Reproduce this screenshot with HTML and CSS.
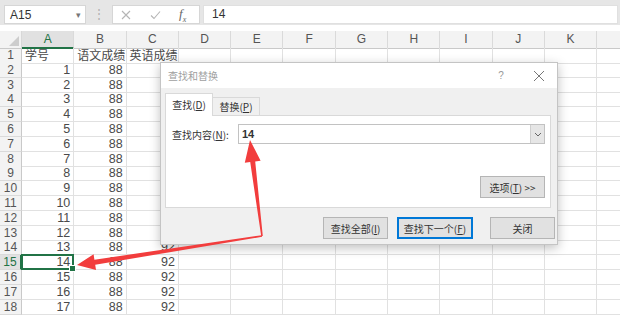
FILE: index.html
```html
<!DOCTYPE html>
<html lang="zh-CN">
<head>
  <meta charset="UTF-8">
  <title>查找和替换</title>
  <link rel="stylesheet" href="styles.css">
</head>
<body>

<div class="formula-bar">
  <div class="name-box"><span>A15</span><span class="caret">▾</span></div>
  <div class="grip">⋮</div>
  <div class="fx-box">
    <svg class="fx-icon" width="10" height="10" viewBox="0 0 10 10"><path d="M1 1 L9 9 M9 1 L1 9" stroke="#b5b5b5" stroke-width="1.1" fill="none"/></svg>
    <svg class="fx-icon" width="11" height="10" viewBox="0 0 11 10"><path d="M1 5.5 L4 8.5 L10 1.5" stroke="#b5b5b5" stroke-width="1.1" fill="none"/></svg>
    <span class="fx">f<sub>x</sub></span>
  </div>
  <div class="formula-input">14</div>
</div>

<div class="sheet" id="sheet"></div>

<div class="dialog">
  <div class="dlg-title">
    <span class="dlg-name">查找和替换</span>
    <span class="dlg-help">?</span>
    <svg class="dlg-close" width="12" height="12" viewBox="0 0 12 12"><path d="M1 1 L11 11 M11 1 L1 11" stroke="#777" stroke-width="1" fill="none"/></svg>
  </div>
  <div class="dlg-body">
    <div class="tabs">
      <div class="tab active">查找(<u>D</u>)</div>
      <div class="tab">替换(<u>P</u>)</div>
    </div>
    <div class="panel">
      <div class="find-row">
        <label>查找内容(<u>N</u>):</label>
        <div class="find-input">
          <span class="find-text">14</span>
          <span class="drop"><svg width="8" height="5" viewBox="0 0 8 5"><path d="M1 1 L4 4 L7 1" stroke="#666" stroke-width="1" fill="none"/></svg></span>
        </div>
      </div>
      <div class="opt-row"><button class="btn">选项(<u>T</u>) &gt;&gt;</button></div>
    </div>
    <div class="btn-row">
      <button class="btn">查找全部(<u>I</u>)</button>
      <button class="btn wide focus">查找下一个(<u>F</u>)</button>
      <button class="btn close">关闭</button>
    </div>
  </div>
</div>

<svg class="arrows" width="620" height="328" viewBox="0 0 620 328">
  <polygon points="262.8,235.9 255.2,161.5 260.6,160.8 250,140 244.8,162.8 250.2,162.1 261.2,236.1" fill="#f23d3d"/>
  <polygon points="261.9,235.2 94.4,259.7 93.6,254.3 77,265 96,270.1 95.2,264.7 262.1,236.8" fill="#f23d3d"/>
</svg>

<script>
  const sheet = document.getElementById("sheet");
  const cols = ["A", "B", "C", "D", "E", "F", "G", "H", "I", "J", "K", ""];

  let html = '<div class="row head"><div class="corner"></div>';
  cols.forEach(c => {
    html += `<div class="col-head${c === "A" ? " active" : ""}">${c}</div>`;
  });
  html += "</div>";

  for (let r = 1; r <= 18; r++) {
    const a = r === 1 ? '<span class="cjk">学号</span>' : r - 1;
    const b = r === 1 ? '<span class="cjk">语文成绩</span>' : 88;
    // column C rows 2-13 sit under the dialog
    const c = r === 1 ? '<span class="cjk">英语成绩</span>' : (r >= 14 ? 92 : "");
    const num = r === 1 ? "" : " num";
    html += `<div class="row"><div class="row-head${r === 15 ? " active" : ""}">${r}</div>`;
    html += `<div class="cell${num}${r === 15 ? " sel" : ""}">${a}</div>`;
    html += `<div class="cell${num}">${b}</div>`;
    html += `<div class="cell${num}">${c}</div>`;
    for (let i = 3; i < cols.length; i++) html += '<div class="cell"></div>';
    html += "</div>";
  }
  sheet.innerHTML = html;
</script>

</body>
</html>
```

FILE: styles.css
```css
* {
  box-sizing: border-box;
  margin: 0;
  padding: 0;
}

body {
  width: 620px;
  height: 328px;
  overflow: hidden;
  position: relative;
  background: #fff;
  font-family: "Liberation Sans", "Noto Sans CJK SC", sans-serif;
  color: #444;
}

/* formula bar */
.formula-bar {
  height: 25px;
  background: #e6e6e6;
  display: flex;
  align-items: flex-start;
  padding: 5px 2px 0 4px;
}

.name-box {
  width: 82px;
  height: 19px;
  background: #fff;
  border: 1px solid #d6d6d6;
  display: flex;
  align-items: center;
  justify-content: space-between;
  padding: 0 4px 0 5px;
  font-size: 12px;
  color: #333;
}

.caret {
  font-size: 9px;
  color: #777;
}

.grip {
  width: 26px;
  text-align: center;
  color: #b0b0b0;
  font-size: 12px;
  line-height: 19px;
}

.fx-box {
  width: 88px;
  height: 19px;
  background: #fff;
  border: 1px solid #d6d6d6;
  display: flex;
  align-items: center;
  gap: 19px;
  padding-left: 8px;
}

.fx {
  font-family: "Liberation Serif", serif;
  font-style: italic;
  font-size: 13px;
  color: #666;
  margin-left: -1px;
}

.fx sub {
  font-size: 8px;
}

.formula-input {
  flex: 1;
  height: 19px;
  margin-left: 3px;
  background: #fff;
  border: 1px solid #e0e0e0;
  padding-left: 8px;
  font-size: 12px;
  line-height: 17px;
  color: #333;
}

/* sheet */
.sheet {
  margin-top: 6px;
}

.row {
  display: grid;
  grid-template-columns: 22px repeat(12, 52.3px);
  height: 14.8px;
}

.row.head {
  height: 17px;
}

.corner {
  background: #f3f3f3;
  border-right: 1px solid #d8d8d8;
  border-bottom: 1px solid #c9c9c9;
  position: relative;
}

.corner::after {
  content: "";
  position: absolute;
  right: 2px;
  bottom: 2px;
  border-left: 10px solid transparent;
  border-bottom: 10px solid #cdcdcd;
}

.col-head {
  background: #f3f3f3;
  border-right: 1px solid #dadada;
  border-bottom: 1px solid #c9c9c9;
  text-align: center;
  font-size: 12px;
  line-height: 16px;
  color: #555;
}

.col-head.active {
  background: #e1e1e1;
  color: #217346;
  border-bottom: 2px solid #217346;
}

.row-head {
  background: #f3f3f3;
  border-right: 1px solid #c9c9c9;
  border-bottom: 1px solid #dadada;
  text-align: center;
  font-size: 12px;
  line-height: 14px;
  color: #555;
}

.row-head.active {
  background: #e1e1e1;
  color: #217346;
  border-right: 2px solid #217346;
}

.cell {
  border-right: 1px solid #e1e1e1;
  border-bottom: 1px solid #e1e1e1;
  font-size: 12.5px;
  line-height: 14px;
  padding: 0 3px;
  white-space: nowrap;
  color: #4a4a4a;
}

.cell.num {
  text-align: right;
}

.cjk {
  font-family: "Noto Sans CJK SC", sans-serif;
  font-size: 12px;
}

.cell.sel {
  position: relative;
}

.cell.sel::before {
  content: "";
  position: absolute;
  left: -1px;
  top: -1px;
  right: -1px;
  bottom: -1px;
  border: 2px solid #217346;
}

.cell.sel::after {
  content: "";
  position: absolute;
  right: -3px;
  bottom: -3px;
  width: 5px;
  height: 5px;
  background: #217346;
  border: 1px solid #fff;
}

/* find dialog */
.dialog {
  position: absolute;
  left: 160px;
  top: 62px;
  width: 398px;
  height: 183px;
  background: #f0f0f0;
  border: 1px solid #c4c4c4;
  box-shadow: 0 3px 10px rgba(0, 0, 0, 0.25);
  font-family: "Noto Sans CJK SC", sans-serif;
  font-size: 10px;
  color: #333;
}

.dlg-title {
  height: 25px;
  background: #fff;
  display: flex;
  align-items: center;
  padding-left: 7px;
}

.dlg-name {
  flex: 1;
  color: #a0a0a0;
}

.dlg-help {
  width: 20px;
  text-align: center;
  color: #999;
  font-family: "Liberation Sans", sans-serif;
  font-size: 10px;
}

.dlg-close {
  margin: 0 12px 0 22px;
}

.dlg-body {
  padding: 5px 4px 0 4px;
}

.tabs {
  display: flex;
  align-items: flex-end;
  height: 22px;
}

.tab {
  width: 47px;
  height: 18px;
  border: 1px solid #d9d9d9;
  border-bottom: none;
  background: #f0f0f0;
  text-align: center;
  line-height: 17px;
}

.tab.active {
  width: 48px;
  height: 23px;
  background: #fff;
  margin-bottom: -1px;
  position: relative;
  z-index: 1;
  line-height: 21px;
}

.tab + .tab {
  border-left: none;
}

.panel {
  height: 93px;
  margin-right: 2px;
  background: #fff;
  border: 1px solid #d9d9d9;
  padding: 8px 5px 0 6px;
}

.find-row {
  display: flex;
  align-items: center;
}

.find-row label {
  width: 66px;
}

.find-input {
  flex: 1;
  height: 20px;
  border: 1px solid #c2c2c2;
  display: flex;
  align-items: center;
  justify-content: space-between;
}

.find-text {
  padding-left: 3px;
  font-family: "Liberation Sans", sans-serif;
  font-size: 11px;
  font-weight: bold;
  color: #333;
}

.drop {
  width: 14px;
  height: 18px;
  background: #e6e6e6;
  border-left: 1px solid #cfcfcf;
  display: flex;
  align-items: center;
  justify-content: center;
}

.opt-row {
  display: flex;
  justify-content: flex-end;
  margin-top: 32px;
}

.btn {
  width: 65px;
  height: 22px;
  background: #e1e1e1;
  border: 1px solid #b5b5b5;
  font-family: "Noto Sans CJK SC", sans-serif;
  font-size: 10px;
  color: #333;
}

.btn-row {
  display: flex;
  justify-content: flex-end;
  gap: 9px;
  margin-top: 9px;
  margin-right: -2px;
}

.btn.wide {
  width: 76px;
}

.btn.focus {
  border-color: #0078d7;
  box-shadow: inset 0 0 0 1px #0078d7;
}

.btn.close {
  margin-left: 8px;
}

/* red pointer arrows */
.arrows {
  position: absolute;
  left: 0;
  top: 0;
  pointer-events: none;
}
```
